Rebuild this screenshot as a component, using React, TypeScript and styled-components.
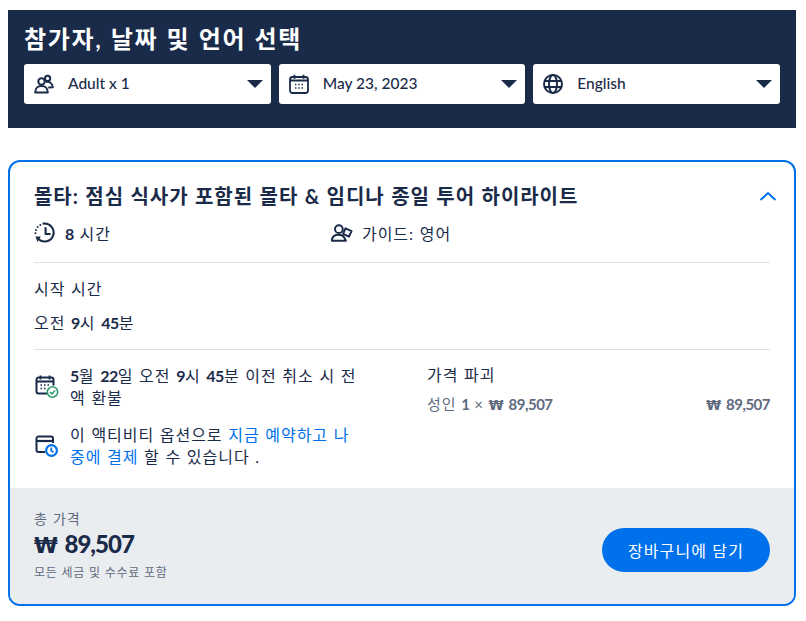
import React from "react";
import styled, { createGlobalStyle } from "styled-components";

const NAVY = "#1a2b49";
const BLUE = "#0071eb";
const SANS = `Lato, "Noto Sans CJK KR", sans-serif`;

const GlobalStyle = createGlobalStyle`
  html, body {
    margin: 0;
    padding: 0;
    background: #fff;
    font-family: ${SANS};
    color: ${NAVY};
    letter-spacing: 0.06em;
    word-spacing: 0.04em;
  }
  b {
    letter-spacing: -0.5px;
  }
`;

const PeopleIcon = () => (
  <svg width="20" height="20" viewBox="0 0 20 20" fill="none" stroke={NAVY} strokeWidth="2">
    <circle cx="7.5" cy="7.5" r="3.2" />
    <circle cx="13.6" cy="4.4" r="2.6" />
    <path d="M1.2 18.4c0-4 2.6-6.4 6.3-6.4s6.3 2.4 6.3 6.4z" strokeLinejoin="round" />
    <path d="M11.6 8c3.4-.8 7 1 7.2 5.2l-4.6.4" strokeLinejoin="round" />
  </svg>
);

const CalendarIcon = () => (
  <svg width="20" height="20" viewBox="0 0 20 20" fill="none" stroke={NAVY} strokeWidth="1.8">
    <rect x="1" y="3" width="18" height="16" rx="2.5" />
    <path d="M5.5 .8v4M14.5 .8v4M1 6.5h18" />
    <path d="M6 10.5h1.4M9.3 10.5h1.4M12.6 10.5h1.4M6 14h1.4M9.3 14h1.4M12.6 14h1.4" strokeWidth="1.5" />
  </svg>
);

const GlobeIcon = () => (
  <svg width="20" height="20" viewBox="0 0 20 20" fill="none" stroke={NAVY} strokeWidth="2">
    <circle cx="10" cy="10" r="9" />
    <ellipse cx="10" cy="10" rx="4" ry="9" />
    <path d="M1.6 7h16.8M1.6 13h16.8" />
  </svg>
);

const ClockBackIcon = () => (
  <svg width="22" height="22" viewBox="0 0 22 22" fill="none" stroke={NAVY} strokeWidth="2.1">
    <path d="M9.5 1.6A9 9 0 1 1 4.4 17" strokeLinecap="round" />
    <path d="M11.6 6v6h4.2" strokeLinecap="round" strokeLinejoin="round" />
    <path d="M1.4 14.6h5.4l-3.2 5.4z" fill={NAVY} stroke="none" />
    <g fill={NAVY} stroke="none">
      <circle cx="6.3" cy="2.9" r="1" />
      <circle cx="3.6" cy="5" r="1" />
      <circle cx="2" cy="8" r="1" />
      <circle cx="1.5" cy="11.2" r="1" />
    </g>
  </svg>
);

const GuideIcon = () => (
  <svg width="22" height="20" viewBox="0 0 24 20" fill="none" stroke={NAVY} strokeWidth="2.2" strokeLinejoin="round">
    <circle cx="8.6" cy="5.8" r="4.2" />
    <path d="M1 18.4c0-4.4 3-6.6 7.2-6.6 3 0 5 1 6.2 3l1.8 3.6z" />
    <path d="M13.2 11l2.6-6 6.6 3-2.8 6z" />
  </svg>
);

const CalendarCheckIcon = () => (
  <svg width="24" height="24" viewBox="0 0 24 24" fill="none">
    <path d="M13 18.5H3.5A2 2 0 0 1 1.5 16.5V4.5a2 2 0 0 1 2-2h13a2 2 0 0 1 2 2v6" stroke={NAVY} strokeWidth="2" />
    <path d="M5.5 .5v4M14.5 .5v4M1.5 6.5h17" stroke={NAVY} strokeWidth="1.8" />
    <path d="M5.5 10h1.5M9 10h1.5M12.5 10h1.5M5.5 13.5h1.5M9 13.5h1.5" stroke={NAVY} strokeWidth="1.5" />
    <circle cx="17.5" cy="17" r="5.2" fill="#fff" stroke="#2e9e6b" strokeWidth="1.6" />
    <path d="M15 17l1.9 1.9 3.2-3.4" stroke="#2e9e6b" strokeWidth="1.6" />
  </svg>
);

const CardClockIcon = () => (
  <svg width="24" height="24" viewBox="0 0 24 24" fill="none">
    <path d="M10 18H3.5a2 2 0 0 1-2-2V4.5a2 2 0 0 1 2-2h12.5a2 2 0 0 1 2 2V9" stroke={NAVY} strokeWidth="2" />
    <path d="M1.5 7h16.5" stroke={NAVY} strokeWidth="2.2" />
    <circle cx="16.5" cy="16.5" r="5.4" fill="#fff" stroke={BLUE} strokeWidth="2.2" />
    <path d="M16.3 13.4v3.4l2.2 1.4" stroke={BLUE} strokeWidth="1.7" />
  </svg>
);

const ChevronUp = () => (
  <svg width="18" height="10" viewBox="0 0 18 10" fill="none" stroke={BLUE} strokeWidth="2">
    <path d="M1.5 9L9 2l7.5 7" />
  </svg>
);

const selectors = [
  { icon: <PeopleIcon />, label: "Adult x 1" },
  { icon: <CalendarIcon />, label: "May 23, 2023" },
  { icon: <GlobeIcon />, label: "English" },
];

const App: React.FC = () => (
  <Page>
    <GlobalStyle />
    <Banner>
      <BannerTitle>참가자, 날짜 및 언어 선택</BannerTitle>
      <Selectors>
        {selectors.map((s) => (
          <Selector key={s.label}>
            <SelectorIcon>{s.icon}</SelectorIcon>
            <SelectorLabel>{s.label}</SelectorLabel>
            <Caret />
          </Selector>
        ))}
      </Selectors>
    </Banner>

    <Card>
      <CardBody>
        <TitleRow>
          <OptionTitle>몰타: 점심 식사가 포함된 몰타 &amp; 임디나 종일 투어 하이라이트</OptionTitle>
          <ChevronWrap>
            <ChevronUp />
          </ChevronWrap>
        </TitleRow>
        <MetaRow>
          <MetaItem>
            <ClockBackIcon />
            <span>
              <b>8</b> 시간
            </span>
          </MetaItem>
          <MetaItem>
            <GuideIcon />
            <span>가이드: 영어</span>
          </MetaItem>
        </MetaRow>
        <Divider />
        <StartLabel>시작 시간</StartLabel>
        <StartValue>
          오전 <b>9</b>시 <b>45</b>분
        </StartValue>
        <Divider />
        <Details>
          <Policies>
            <Policy>
              <PolicyIcon>
                <CalendarCheckIcon />
              </PolicyIcon>
              <PolicyText>
                <b>5</b>월 <b>22</b>일 오전 <b>9</b>시 <b>45</b>분 이전 취소 시 전액 환불
              </PolicyText>
            </Policy>
            <Policy>
              <PolicyIcon>
                <CardClockIcon />
              </PolicyIcon>
              <PolicyText>
                이 액티비티 옵션으로 <Highlight>지금 예약하고 나중에 결제</Highlight> 할 수 있습니다 .
              </PolicyText>
            </Policy>
          </Policies>
          <Breakdown>
            <BreakdownTitle>가격 파괴</BreakdownTitle>
            <BreakdownRow>
              <span>
                성인 <Amount>1</Amount> × <Won>₩</Won> <Amount>89,507</Amount>
              </span>
              <span>
                <Won>₩</Won> <Amount>89,507</Amount>
              </span>
            </BreakdownRow>
          </Breakdown>
        </Details>
      </CardBody>
      <Footer>
        <div>
          <TotalLabel>총 가격</TotalLabel>
          <TotalPrice>
            <Won>₩</Won> 89,507
          </TotalPrice>
          <TotalNote>모든 세금 및 수수료 포함</TotalNote>
        </div>
        <CartButton>장바구니에 담기</CartButton>
      </Footer>
    </Card>
  </Page>
);

export default App;

const Page = styled.div`
  width: 788px;
  padding: 10px 10px 0 8px;
`;

const Banner = styled.section`
  background: ${NAVY};
  height: 118px;
  box-sizing: border-box;
  padding: 12px 16px 0;
`;

const BannerTitle = styled.h2`
  margin: 0 0 8px;
  color: #fff;
  font-size: 24px;
  font-weight: 600;
  line-height: 34px;
  letter-spacing: 0.07em;
`;

const Selectors = styled.div`
  display: grid;
  grid-template-columns: repeat(3, 1fr);
  gap: 8px;
`;

const Selector = styled.div`
  height: 40px;
  background: #fff;
  border-radius: 3px;
  display: flex;
  align-items: center;
  padding: 0 8px 0 10px;
`;

const SelectorIcon = styled.span`
  width: 34px;
  display: flex;
`;

const SelectorLabel = styled.span`
  flex: 1;
  font-size: 15.5px;
  font-weight: 500;
  letter-spacing: 0;
  word-spacing: 0;
  padding-bottom: 3px;
`;

const Caret = styled.span`
  width: 0;
  height: 0;
  border-left: 8px solid transparent;
  border-right: 8px solid transparent;
  border-top: 8px solid ${NAVY};
`;

const Card = styled.section`
  margin-top: 32px;
  height: 446px;
  box-sizing: border-box;
  border: 2px solid ${BLUE};
  border-radius: 12px;
  overflow: hidden;
  display: flex;
  flex-direction: column;
`;

const CardBody = styled.div`
  flex: 1;
  padding: 20px 24px 0;
`;

const TitleRow = styled.div`
  display: flex;
  align-items: center;
  justify-content: space-between;
  height: 28px;
`;

const OptionTitle = styled.h3`
  margin: 0;
  font-size: 20px;
  font-weight: 700;
  line-height: 28px;
  white-space: nowrap;
`;

const ChevronWrap = styled.span`
  display: flex;
  margin-right: -7px;
`;

const MetaRow = styled.div`
  display: grid;
  grid-template-columns: 297px 1fr;
  margin-top: 11px;
  height: 24px;
`;

const MetaItem = styled.div`
  display: flex;
  align-items: center;
  gap: 9px;
  font-size: 16px;
`;

const Divider = styled.hr`
  margin: 17px 0 0;
  border: 0;
  border-top: 1px solid #dcdfe4;
`;

const StartLabel = styled.div`
  margin-top: 14px;
  font-size: 16px;
  line-height: 24px;
`;

const StartValue = styled.div`
  margin-top: 10px;
  margin-bottom: -3px;
  font-size: 16px;
  line-height: 24px;
`;

const Details = styled.div`
  display: grid;
  grid-template-columns: 393px 1fr;
  padding-top: 15px;
`;

const Policies = styled.div`
  display: flex;
  flex-direction: column;
  gap: 15px;
`;

const Policy = styled.div`
  display: flex;
  align-items: center;
  width: 326px;
`;

const PolicyIcon = styled.span`
  flex: 0 0 36px;
  box-sizing: border-box;
  padding-left: 1px;
  display: flex;
`;

const PolicyText = styled.p`
  margin: 0;
  font-size: 16px;
  line-height: 22px;
  word-break: break-all;
`;

const Highlight = styled.span`
  color: ${BLUE};
`;

const Breakdown = styled.div`
  font-size: 16px;
  margin-top: -2px;
`;

const BreakdownTitle = styled.div`
  line-height: 24px;
`;

const BreakdownRow = styled.div`
  display: flex;
  justify-content: space-between;
  margin-top: 5px;
  font-size: 15px;
  line-height: 24px;
  word-spacing: 0;
  color: #5f6a7e;
`;

const Amount = styled.span`
  font-weight: 700;
  letter-spacing: -0.5px;
`;

const Won = styled.span`
  font-family: "DejaVu Sans", sans-serif;
  font-size: 0.9em;
  font-weight: 700;
  letter-spacing: 0;
`;

const Footer = styled.div`
  height: 116px;
  box-sizing: border-box;
  background: #e9edf0;
  padding: 21px 24px 0;
  display: flex;
  justify-content: space-between;
  align-items: flex-start;
`;

const TotalLabel = styled.div`
  font-size: 14px;
  line-height: 20px;
  color: #5f6a7e;
`;

const TotalPrice = styled.div`
  font-size: 24px;
  font-weight: 900;
  line-height: 30px;
  letter-spacing: -1px;
  word-spacing: 2px;
`;

const TotalNote = styled.div`
  font-size: 12px;
  line-height: 18px;
  margin-top: 3px;
  letter-spacing: 0.065em;
  word-spacing: 0;
  color: #5f6a7e;
`;

const CartButton = styled.button`
  width: 168px;
  height: 44px;
  margin-top: 19px;
  border: 0;
  border-radius: 22px;
  background: ${BLUE};
  color: #fff;
  font-family: ${SANS};
  font-size: 16px;
  letter-spacing: 0.07em;
`;
